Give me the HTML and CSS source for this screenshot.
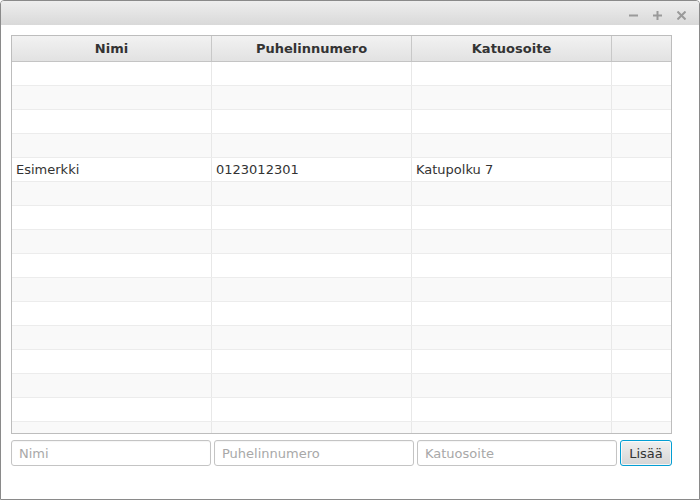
FILE: index.html
```html
<!DOCTYPE html>
<html lang="fi">
<head>
<meta charset="utf-8">
<title>Yhteystiedot</title>
<link rel="stylesheet" href="styles.css">
</head>
<body>
<div class="window">
  <div class="titlebar">
    <svg class="ctl" width="9" height="9" viewBox="0 0 9 9"><path d="M0 4.5H9" /></svg>
    <svg class="ctl" width="9" height="9" viewBox="0 0 9 9"><path d="M0 4.5H9M4.5 0V9" /></svg>
    <svg class="ctl" width="9" height="9" viewBox="0 0 9 9"><path d="M0.5 0.5L8.5 8.5M8.5 0.5L0.5 8.5" /></svg>
  </div>
  <div class="content">
    <div class="table">
      <div class="thead">
        <div class="th">Nimi</div>
        <div class="th">Puhelinnumero</div>
        <div class="th">Katuosoite</div>
        <div class="th last"></div>
      </div>
      <div class="tbody">
        <div class="tr"><div class="td"></div><div class="td"></div><div class="td"></div><div class="td last"></div></div>
        <div class="tr odd"><div class="td"></div><div class="td"></div><div class="td"></div><div class="td last"></div></div>
        <div class="tr"><div class="td"></div><div class="td"></div><div class="td"></div><div class="td last"></div></div>
        <div class="tr odd"><div class="td"></div><div class="td"></div><div class="td"></div><div class="td last"></div></div>
        <div class="tr"><div class="td">Esimerkki</div><div class="td">0123012301</div><div class="td">Katupolku 7</div><div class="td last"></div></div>
        <div class="tr odd"><div class="td"></div><div class="td"></div><div class="td"></div><div class="td last"></div></div>
        <div class="tr"><div class="td"></div><div class="td"></div><div class="td"></div><div class="td last"></div></div>
        <div class="tr odd"><div class="td"></div><div class="td"></div><div class="td"></div><div class="td last"></div></div>
        <div class="tr"><div class="td"></div><div class="td"></div><div class="td"></div><div class="td last"></div></div>
        <div class="tr odd"><div class="td"></div><div class="td"></div><div class="td"></div><div class="td last"></div></div>
        <div class="tr"><div class="td"></div><div class="td"></div><div class="td"></div><div class="td last"></div></div>
        <div class="tr odd"><div class="td"></div><div class="td"></div><div class="td"></div><div class="td last"></div></div>
        <div class="tr"><div class="td"></div><div class="td"></div><div class="td"></div><div class="td last"></div></div>
        <div class="tr odd"><div class="td"></div><div class="td"></div><div class="td"></div><div class="td last"></div></div>
        <div class="tr"><div class="td"></div><div class="td"></div><div class="td"></div><div class="td last"></div></div>
        <div class="tr odd"><div class="td"></div><div class="td"></div><div class="td"></div><div class="td last"></div></div>
      </div>
    </div>
    <div class="form">
      <input class="field" type="text" placeholder="Nimi">
      <input class="field" type="text" placeholder="Puhelinnumero">
      <input class="field" type="text" placeholder="Katuosoite">
      <button class="btn" type="button">Lisää</button>
    </div>
  </div>
</div>
</body>
</html>
```
FILE: styles.css
```css
* { box-sizing: border-box; }
html, body { margin: 0; padding: 0; background: #ffffff; }
body {
  font-family: "DejaVu Sans", "Liberation Sans", sans-serif;
  font-size: 13px;
  color: #333333;
}
.window {
  width: 700px;
  height: 500px;
  border: 1px solid #8a8a8a;
  border-radius: 4px 4px 0 0;
  background: #ffffff;
  display: flex;
  flex-direction: column;
  overflow: hidden;
}
.titlebar {
  height: 24px;
  flex: none;
  background: linear-gradient(#eeeeee, #d9d9d9);
  display: flex;
  justify-content: flex-end;
  align-items: center;
  gap: 15px;
  padding: 4px 13px 0 0;
}
.ctl path {
  stroke: #9a9a9a;
  stroke-width: 2;
  fill: none;
}
.content {
  padding: 10px 0 0 10px;
}
.table {
  width: 661px;
  height: 399px;
  border: 1px solid #bdbdbd;
  display: flex;
  flex-direction: column;
  overflow: hidden;
}
.thead {
  display: flex;
  flex: none;
  height: 26px;
  border-bottom: 1px solid #c4c4c4;
  background: linear-gradient(#f2f2f2, #e2e2e2);
}
.th {
  width: 200px;
  flex: none;
  border-right: 1px solid #c8c8c8;
  display: flex;
  align-items: center;
  justify-content: center;
  font-weight: bold;
  color: #333333;
}
.th.last { flex: 1; width: auto; border-right: none; }
.tbody {
  flex: 1;
  overflow: hidden;
}
.tr {
  display: flex;
  height: 24px;
  border-bottom: 1px solid #ececec;
  background: #ffffff;
}
.tr.odd { background: #f9f9f9; }
.td {
  width: 200px;
  flex: none;
  border-right: 1px solid #e8e8e8;
  display: flex;
  align-items: center;
  padding-left: 4px;
  white-space: nowrap;
}
.td.last { flex: 1; width: auto; border-right: none; }
.form {
  display: flex;
  gap: 3px;
  margin-top: 6px;
  width: 661px;
}
.field {
  width: 200px;
  height: 26px;
  border: 1px solid #c4c4c4;
  border-radius: 3px;
  background: #ffffff;
  box-shadow: inset 0 1px 1px rgba(0,0,0,0.04);
  padding: 0 7px;
  font-family: "DejaVu Sans", "Liberation Sans", sans-serif;
  font-size: 13px;
  color: #333333;
  outline: none;
}
.field::placeholder { color: #a8a8a8; }
.btn {
  width: 52px;
  height: 26px;
  border: 1px solid #039ed3;
  border-radius: 3px;
  background: linear-gradient(#f0f0f0, #d5d5d5);
  box-shadow: inset 0 0 0 1px rgba(255,255,255,0.75);
  padding: 0;
  font-family: "DejaVu Sans", "Liberation Sans", sans-serif;
  font-size: 13px;
  color: #333333;
}
```
